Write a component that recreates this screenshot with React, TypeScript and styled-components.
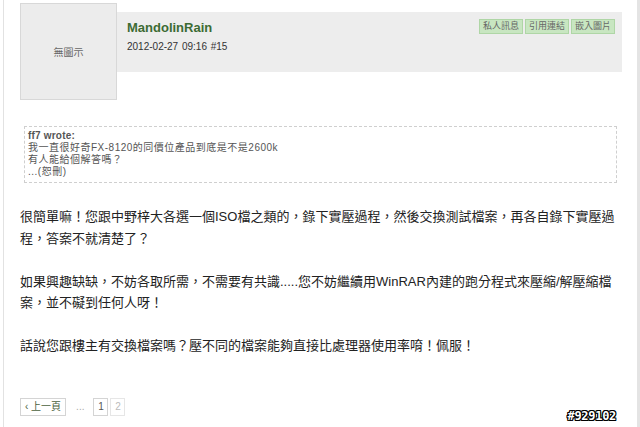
import styled, { createGlobalStyle } from "styled-components";

const GlobalStyle = createGlobalStyle`
  html, body {
    margin: 0;
    padding: 0;
    background: #fff;
  }
  body {
    font-family: "Liberation Sans", "Noto Sans CJK TC", sans-serif;
  }
`;

const Frame = styled.div`
  position: relative;
  box-sizing: border-box;
  width: 637px;
  height: 427px;
  margin-left: 3px;
  padding: 3px 15px 0 16px;
  border-left: 1px solid #e2e2e2;
  border-right: 3px solid #e4e4e4;
  overflow: hidden;
`;

const PostHead = styled.div`
  display: flex;
  align-items: flex-start;
`;

const Avatar = styled.div`
  box-sizing: border-box;
  width: 97px;
  height: 97px;
  flex-shrink: 0;
  display: flex;
  align-items: center;
  justify-content: center;
  background: #ececec;
  border: 1px solid #d8d8d8;
  color: #666;
  font-size: 10px;
`;

const HeadBar = styled.div`
  box-sizing: border-box;
  flex: 1;
  height: 60px;
  margin-top: 9px;
  padding: 8px 7px 0 10px;
  display: flex;
  justify-content: space-between;
  align-items: flex-start;
  background: #ededed;
`;

const Author = styled.div`
  display: flex;
  flex-direction: column;
`;

const Name = styled.div`
  font-size: 13px;
  line-height: 16px;
  font-weight: bold;
  color: #3c6b33;
`;

const PostDate = styled.div`
  margin-top: 4px;
  font-size: 10px;
  line-height: 14px;
  color: #333;
  word-spacing: 1px;
`;

const Actions = styled.div`
  display: flex;
  gap: 2px;
  margin-top: -1px;
`;

const ActionButton = styled.span`
  box-sizing: border-box;
  height: 15px;
  padding: 0 3px;
  background: #c8e6c1;
  border: 1px solid #afd6a6;
  color: #666;
  font-size: 9px;
  line-height: 13px;
`;

const Quote = styled.div`
  box-sizing: border-box;
  margin: 26px 5px 0 4px;
  height: 57px;
  padding: 3px 3px 0;
  border: 1px dashed #cfcfcf;
  color: #555;
  font-size: 10px;
  line-height: 12px;
  letter-spacing: 0.5px;
`;

const QuoteAuthor = styled.div`
  font-weight: bold;
  letter-spacing: 0.2px;
`;

const Body = styled.div`
  width: 600px;
  margin-top: 23px;
  color: #222;
  font-size: 13px;
  line-height: 21.5px;
`;

const Paragraph = styled.p`
  margin: 0 0 21.5px;
`;

const Pager = styled.div`
  display: flex;
  align-items: center;
  gap: 2px;
  margin-top: 41px;
`;

const PageLink = styled.span<{ $muted?: boolean; $wide?: boolean }>`
  box-sizing: border-box;
  height: 18px;
  padding: 0 ${(p) => (p.$wide ? "4px" : "3px")};
  margin-right: ${(p) => (p.$wide ? "8px" : "0")};
  border: 1px solid ${(p) => (p.$muted ? "#e6e6e6" : "#d4d4d4")};
  color: ${(p) => (p.$muted ? "#bbb" : p.$wide ? "#4b6240" : "#555")};
  font-size: 10px;
  line-height: 16px;
  text-align: center;
  min-width: 15px;
`;

const Ellipsis = styled.span`
  color: #aaa;
  font-size: 10px;
  margin-right: 7px;
`;

const Stamp = styled.div`
  position: absolute;
  right: 21px;
  bottom: 4px;
  font-family: "DejaVu Sans Mono", monospace;
  font-weight: bold;
  font-size: 12px;
  color: #fff;
  letter-spacing: -0.3px;
  text-shadow: -1px -1px 0 #000, 1px -1px 0 #000, -1px 1px 0 #000, 1px 1px 0 #000,
    0 1px 0 #000, 0 -1px 0 #000, 1px 0 0 #000, -1px 0 0 #000;
`;

const App = () => {
  return (
    <>
      <GlobalStyle />
      <Frame>
        <PostHead>
          <Avatar>無圖示</Avatar>
          <HeadBar>
            <Author>
              <Name>MandolinRain</Name>
              <PostDate>2012-02-27 09:16 #15</PostDate>
            </Author>
            <Actions>
              <ActionButton>私人訊息</ActionButton>
              <ActionButton>引用連結</ActionButton>
              <ActionButton>嵌入圖片</ActionButton>
            </Actions>
          </HeadBar>
        </PostHead>

        <Quote>
          <QuoteAuthor>ff7 wrote:</QuoteAuthor>
          <div>我一直很好奇FX-8120的同價位產品到底是不是2600k</div>
          <div>有人能給個解答嗎？</div>
          <div>...(恕刪)</div>
        </Quote>

        <Body>
          <Paragraph>
            很簡單嘛！您跟中野梓大各選一個ISO檔之類的，錄下實壓過程，然後交換測試檔案，再各自錄下實壓過程，答案不就清楚了？
          </Paragraph>
          <Paragraph>
            如果興趣缺缺，不妨各取所需，不需要有共識.....您不妨繼續用WinRAR內建的跑分程式來壓縮/解壓縮檔案，並不礙到任何人呀！
          </Paragraph>
          <Paragraph>
            話說您跟樓主有交換檔案嗎？壓不同的檔案能夠直接比處理器使用率唷！佩服！
          </Paragraph>
        </Body>

        <Pager>
          <PageLink $wide>‹ 上一頁</PageLink>
          <Ellipsis>...</Ellipsis>
          <PageLink>1</PageLink>
          <PageLink $muted>2</PageLink>
        </Pager>

        <Stamp>#929102</Stamp>
      </Frame>
    </>
  );
};

export default App;
